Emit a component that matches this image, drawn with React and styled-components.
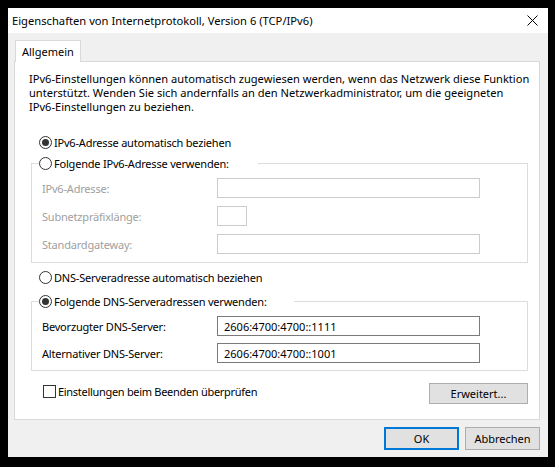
import React from 'react';
import styled, {createGlobalStyle} from 'styled-components';

const Global = createGlobalStyle`
    html, body {
        margin: 0;
        padding: 0;
        background: #000;
    }
    body {
        font-family: "Noto Sans", "DejaVu Sans", sans-serif;
        font-size: 11px;
        color: #000;
    }
    * {
        box-sizing: border-box;
    }
`;

const Desktop = styled.div`
    padding: 8px;
    min-height: 467px;
    background: #000;
`;

const Window = styled.div`
    width: 540px;
    height: 449px;
    background: #f0f0f0;
    display: flex;
    flex-direction: column;
`;

const TitleBar = styled.div`
    height: 25px;
    background: #fff;
    display: flex;
    align-items: center;
    justify-content: space-between;
    padding: 0 10px 0 4px;
`;

const Title = styled.span`
    font-size: 11.2px;
    white-space: nowrap;
`;

const Body = styled.div`
    padding: 7px 8px 0 6px;
    display: flex;
    flex-direction: column;
`;

const TabStrip = styled.div`
    display: flex;
    padding-left: 1px;
`;

const Tab = styled.div`
    height: 22px;
    padding: 0 6px;
    display: flex;
    align-items: center;
    background: #fff;
    border: 1px solid #d9d9d9;
    border-bottom: none;
    margin-bottom: -1px;
    position: relative;
    z-index: 1;
`;

const Panel = styled.div`
    height: 359px;
    background: #fff;
    border: 1px solid #d9d9d9;
    display: flex;
    flex-direction: column;
    padding: 10px 0 0 0;
`;

const Intro = styled.p`
    margin: 0 0 0 14px;
    line-height: 14px;
    white-space: nowrap;
    font-size: 11.1px;
`;

const RadioRow = styled.label`
    display: flex;
    align-items: center;
    gap: 2px;
    height: 16px;
    margin-top: ${p => p.$top || 0}px;
    margin-left: ${p => p.$left ?? 24}px;
    white-space: nowrap;
    letter-spacing: -0.2px;
`;

const Circle = styled.span`
    width: 13px;
    height: 13px;
    border-radius: 50%;
    border: 1px solid #333;
    background: #fff;
    display: flex;
    align-items: center;
    justify-content: center;
    flex: none;
`;

const Dot = styled.span`
    width: 7px;
    height: 7px;
    border-radius: 50%;
    background: #333;
`;

const Group = styled.fieldset`
    margin: ${p => p.$top || 0}px 0 0 16px;
    width: 497px;
    padding: 0 0 ${p => p.$bottom || 8}px 0;
    border: 1px solid #dcdcdc;
    min-inline-size: 0;
    display: flex;
    flex-direction: column;
`;

const Legend = styled.legend`
    margin-left: 7px;
    padding: 0;
    width: ${p => p.$width}px;
    height: 16px;
    display: flex;
    align-items: center;
    gap: 2px;
    white-space: nowrap;
    letter-spacing: -0.2px;
`;

const Fields = styled.div`
    display: flex;
    flex-direction: column;
    gap: ${p => p.$gap || 8}px;
    padding-top: 7px;
`;

const FieldRow = styled.div`
    display: flex;
    align-items: center;
    padding-left: 10px;
`;

const FieldLabel = styled.span`
    width: 175px;
    letter-spacing: -0.2px;
    color: ${p => p.$disabled ? '#a0a0a0' : '#000'};
`;

const TextBox = styled.div`
    width: ${p => p.$width || 263}px;
    height: 20px;
    border: 1px solid ${p => p.$disabled ? '#cccccc' : '#7a7a7a'};
    background: #fff;
    display: flex;
    align-items: center;
    padding-left: 6px;
`;

const BottomRow = styled.div`
    display: flex;
    align-items: center;
    justify-content: space-between;
    margin: 12px 11px 0 28px;
`;

const CheckRow = styled.label`
    display: flex;
    align-items: center;
    gap: 2px;
    margin-top: -5px;
    letter-spacing: -0.3px;
`;

const Box = styled.span`
    width: 13px;
    height: 13px;
    border: 1px solid #333;
    background: #fff;
`;

const Button = styled.button`
    font: inherit;
    color: #000;
    width: ${p => p.$width || 75}px;
    height: ${p => p.$height || 23}px;
    background: #e1e1e1;
    border: 1px solid ${p => p.$default ? '#0078d7' : '#adadad'};
    box-shadow: ${p => p.$default ? 'inset 0 0 0 1px #0078d7' : 'none'};
    padding: 0;
`;

const DialogButtons = styled.div`
    display: flex;
    justify-content: flex-end;
    gap: 6px;
    margin-top: 7px;
`;

const Radio = ({checked}) => (
    <Circle>{checked && <Dot />}</Circle>
);

const CloseIcon = () => (
    <svg width="11" height="11" viewBox="0 0 11 11">
        <path d="M0.5 0.5 L10.5 10.5 M10.5 0.5 L0.5 10.5" stroke="#000" strokeWidth="1" />
    </svg>
);

const App = () => {
    return <>
        <Global />
        <Desktop>
            <Window>
                <TitleBar>
                    <Title>Eigenschaften von Internetprotokoll, Version 6 (TCP/IPv6)</Title>
                    <CloseIcon />
                </TitleBar>
                <Body>
                    <TabStrip>
                        <Tab>Allgemein</Tab>
                    </TabStrip>
                    <Panel>
                        <Intro>
                            IPv6-Einstellungen können automatisch zugewiesen werden, wenn das Netzwerk diese Funktion<br />
                            unterstützt. Wenden Sie sich andernfalls an den Netzwerkadministrator, um die geeigneten<br />
                            IPv6-Einstellungen zu beziehen.
                        </Intro>

                        <RadioRow $top={20}><Radio checked />IPv6-Adresse automatisch beziehen</RadioRow>

                        <Group $top={5} $bottom={8}>
                            <Legend $width={219}><Radio />Folgende IPv6-Adresse verwenden:</Legend>
                            <Fields $gap={8}>
                                <FieldRow>
                                    <FieldLabel $disabled>IPv6-Adresse:</FieldLabel>
                                    <TextBox $disabled />
                                </FieldRow>
                                <FieldRow>
                                    <FieldLabel $disabled>Subnetzpräfixlänge:</FieldLabel>
                                    <TextBox $disabled $width={30} />
                                </FieldRow>
                                <FieldRow>
                                    <FieldLabel $disabled>Standardgateway:</FieldLabel>
                                    <TextBox $disabled />
                                </FieldRow>
                            </Fields>
                        </Group>

                        <RadioRow $top={6}><Radio />DNS-Serveradresse automatisch beziehen</RadioRow>

                        <Group $top={8} $bottom={7}>
                            <Legend $width={255}><Radio checked />Folgende DNS-Serveradressen verwenden:</Legend>
                            <Fields $gap={7}>
                                <FieldRow>
                                    <FieldLabel>Bevorzugter DNS-Server:</FieldLabel>
                                    <TextBox>2606:4700:4700::1111</TextBox>
                                </FieldRow>
                                <FieldRow>
                                    <FieldLabel>Alternativer DNS-Server:</FieldLabel>
                                    <TextBox>2606:4700:4700::1001</TextBox>
                                </FieldRow>
                            </Fields>
                        </Group>

                        <BottomRow>
                            <CheckRow><Box />Einstellungen beim Beenden überprüfen</CheckRow>
                            <Button $width={99} $height={21}>Erweitert...</Button>
                        </BottomRow>
                    </Panel>
                    <DialogButtons>
                        <Button $default>OK</Button>
                        <Button>Abbrechen</Button>
                    </DialogButtons>
                </Body>
            </Window>
        </Desktop>
    </>
}

export default App;
